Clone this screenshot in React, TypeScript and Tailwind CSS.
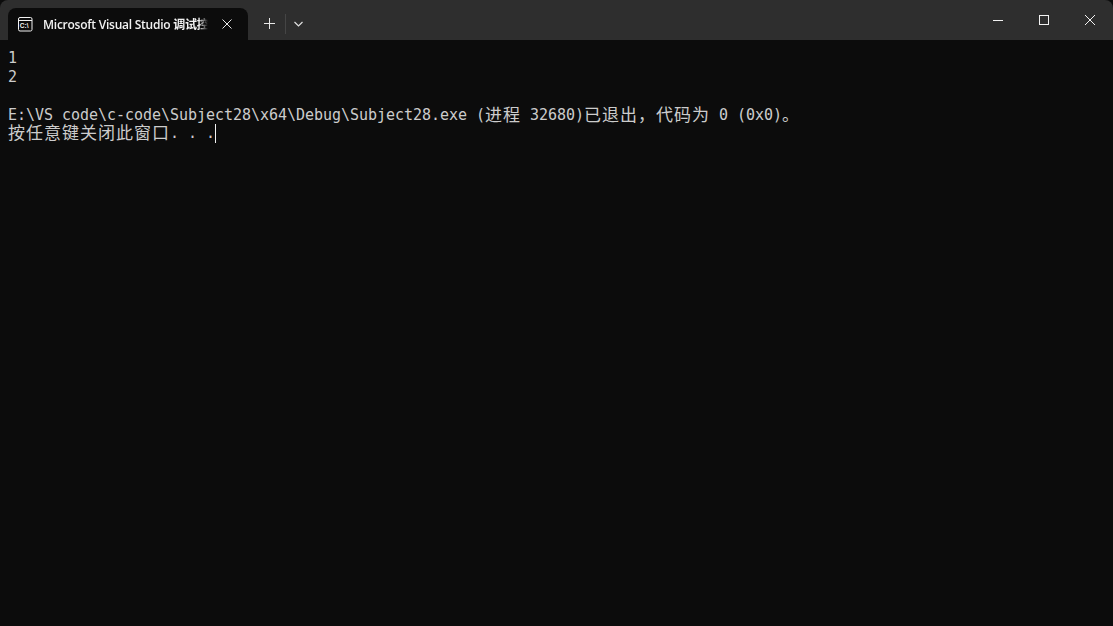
const OUTPUT = [
  "1",
  "2",
  "",
  "E:\\VS code\\c-code\\Subject28\\x64\\Debug\\Subject28.exe (进程 32680)已退出，代码为 0 (0x0)。",
];

const isWide = (ch: string) => ch.charCodeAt(0) > 0x2e80;

// terminal grid: latin chars take one 9px cell, CJK two
function TermLine({ text, cursor }: { text: string; cursor?: boolean }) {
  return (
    <div className="flex h-[19px] items-center whitespace-pre">
      {Array.from(text).map((ch, i) => (
        <span
          key={i}
          className={
            isWide(ch)
              ? "w-[18px] shrink-0 text-left text-[17px] leading-[19px]"
              : "w-[9px] shrink-0 leading-[19px]"
          }
        >
          {ch}
        </span>
      ))}
      {cursor && <span className="h-[19px] w-px bg-[#f2f2f2]" />}
    </div>
  );
}

function TermIcon() {
  return (
    <svg width="15" height="15" viewBox="0 0 15 15" fill="none" stroke="#f2f2f2" strokeWidth="1">
      <rect x="0.5" y="0.5" width="13.5" height="13.5" rx="1.5" />
      <path d="M0.5 3.5h13.5" />
      <text x="1.8" y="11" fontSize="6.5" fontWeight="700" fill="#f2f2f2" stroke="none" fontFamily="'Liberation Sans', sans-serif">
        C:\
      </text>
    </svg>
  );
}

export default function App() {
  return (
    <div className="h-[626px] w-[1113px] overflow-hidden bg-[#0c0c0c]">
      <div className="flex h-10 items-end overflow-hidden rounded-t-lg bg-[#2e2e2e] pl-2">
        <div className="flex h-8 w-[240px] items-center rounded-t-lg bg-[#0c0c0c] pl-[10px] text-[#f2f2f2]">
          <TermIcon />
          <div className="ml-[10px] w-[165px] overflow-hidden whitespace-nowrap pt-px font-['Open_Sans','Noto_Sans_CJK_SC',sans-serif] text-[12px] font-semibold tracking-[-0.25px] [mask-image:linear-gradient(to_right,black_156px,transparent_165px)]">
            Microsoft Visual Studio 调试控制台
          </div>
          <svg className="ml-[14px]" width="10" height="10" viewBox="0 0 10 10" stroke="#e8e8e8" strokeWidth="1">
            <path d="M0.5 0.5l9 9M9.5 0.5l-9 9" />
          </svg>
        </div>
        <div className="flex h-8 items-center pb-[1px]">
          <div className="flex w-[37px] justify-start pl-4">
            <svg width="11" height="11" viewBox="0 0 11 11" stroke="#e8e8e8" strokeWidth="1">
              <path d="M5.5 0v11M0 5.5h11" />
            </svg>
          </div>
          <div className="h-5 w-px bg-[#454545]" />
          <div className="flex w-[25px] justify-center">
            <svg width="9" height="6" viewBox="0 0 9 6" fill="none" stroke="#e0e0e0" strokeWidth="1.2">
              <path d="M0.5 1l4 4 4-4" />
            </svg>
          </div>
        </div>
        <div className="ml-auto flex h-10">
          <div className="flex w-[46px] items-center justify-center">
            <div className="h-px w-[10px] bg-[#f2f2f2]" />
          </div>
          <div className="flex w-[46px] items-center justify-center">
            <div className="h-[10px] w-[10px] border border-[#f2f2f2]" />
          </div>
          <div className="flex w-[46px] items-center justify-center">
            <svg width="10" height="10" viewBox="0 0 10 10" stroke="#f2f2f2" strokeWidth="1">
              <path d="M0 0l10 10M10 0L0 10" />
            </svg>
          </div>
        </div>
      </div>
      <div className="px-2 pt-[9px] font-['DejaVu_Sans_Mono','Noto_Sans_CJK_SC',monospace] text-[15px] text-[#cccccc]">
        {OUTPUT.map((line, i) => (
          <TermLine key={i} text={line} />
        ))}
        <div className="-mt-px">
          <TermLine text="按任意键关闭此窗口. . ." cursor />
        </div>
      </div>
    </div>
  );
}
